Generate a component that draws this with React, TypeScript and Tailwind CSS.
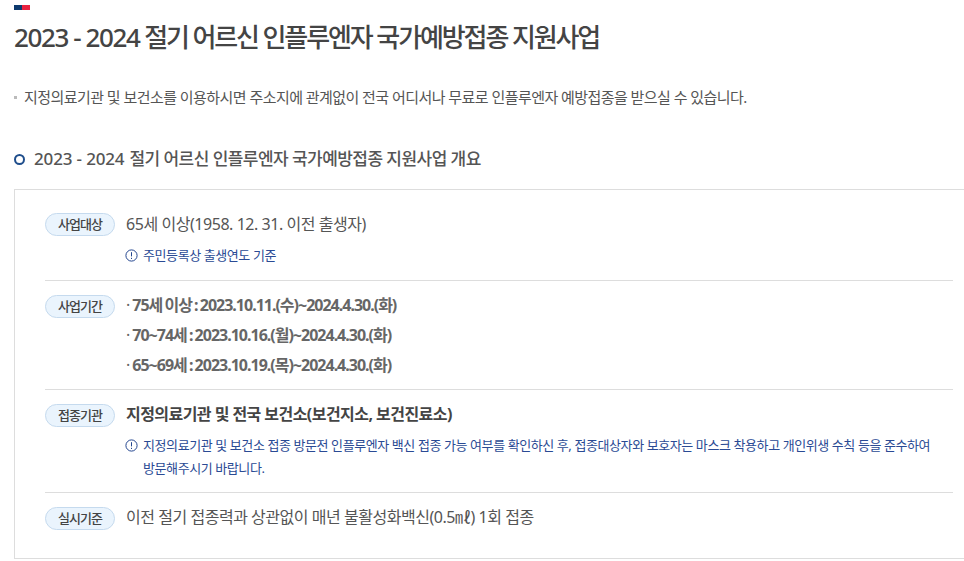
function Badge({ label }: { label: string }) {
  return (
    <span className="flex h-[23px] w-[70px] flex-none items-center justify-center rounded-full border border-[#c5daee] bg-[#eaf4fd] text-[13px] font-medium tracking-[-0.9px] text-[#444]">
      {label}
    </span>
  );
}

function InfoIcon() {
  return (
    <svg className="h-[13px] w-[13px] flex-none" viewBox="0 0 13 13" fill="none" stroke="#24468f">
      <circle cx="6.5" cy="6.5" r="5.6" />
      <path d="M6.5 3.2v4.2M6.5 8.8v1.2" />
    </svg>
  );
}

function Note({ children }: { children: React.ReactNode }) {
  return (
    <div className="-ml-px flex w-[820px] gap-[5px] text-[13px] leading-[23px] tracking-[-0.41px] text-[#2a4a94]">
      <span className="flex h-[23px] flex-none items-start pt-[5px]"><InfoIcon /></span>
      <p>{children}</p>
    </div>
  );
}

function DateLine({ children }: { children: React.ReactNode }) {
  return (
    <p className="h-[30px] text-[16px] font-bold leading-[30px] tracking-[-1px] text-[#666] [word-spacing:-1px]">
      <span className="mr-[3px] font-normal">·</span>
      {children}
    </p>
  );
}

export default function App() {
  return (
    <div className="h-[561px] w-[964px] overflow-hidden bg-white pl-[14px] pt-[5px] font-['Noto_Sans','Noto_Sans_CJK_KR',sans-serif]">
      <div className="flex h-[5px] w-[16px]">
        <div className="w-[8px] bg-[#0d3a6e]" />
        <div className="w-[8px] bg-[#e8223f]" />
      </div>
      <h1 className="mt-[8px] text-[26px] font-medium leading-[38px] tracking-[-2.1px] text-[#444]">
        <span className="tracking-[-1.4px]">2023 - 2024</span>{" "}
        절기 어르신 인플루엔자 국가예방접종 지원사업
      </h1>
      <p className="mt-[31px] flex items-center text-[15px] leading-[20px] tracking-[-0.55px] text-[#555]">
        <span className="mr-[7px] h-[3px] w-[3px] bg-[#bbb]" />
        지정의료기관 및 보건소를 이용하시면 주소지에 관계없이 전국 어디서나 무료로 인플루엔자 예방접종을 받으실 수 있습니다.
      </p>
      <h2 className="mt-[40px] flex items-center text-[17px] font-medium leading-[24px] tracking-[-0.55px] text-[#555]">
        <span className="mr-[9px] h-[11px] w-[11px] rounded-full border-2 border-[#1f4e8c]" />
        <span className="mr-[5px] tracking-[-0.15px]">2023 - 2024</span>
        절기 어르신 인플루엔자 국가예방접종 지원사업 개요
      </h2>
      <div className="mt-[18px] h-[370px] w-[970px] border border-[#ddd] pl-[30px] pr-[21px] pt-[23px]">
        <div className="w-[908px]">
          <div className="flex h-[68px] gap-[11px] border-b border-[#ddd]">
            <Badge label="사업대상" />
            <div>
              <p className="text-[16px] leading-[23px] tracking-[-0.45px] text-[#555]">65세 이상(1958. 12. 31. 이전 출생자)</p>
              <div className="mt-[8px]"><Note>주민등록상 출생연도 기준</Note></div>
            </div>
          </div>
          <div className="flex h-[109px] gap-[11px] border-b border-[#ddd] pt-[9px]">
            <div className="mt-[5px]"><Badge label="사업기간" /></div>
            <div>
              <DateLine>75세 이상 : 2023.10.11.(수)~2024.4.30.(화)</DateLine>
              <DateLine>70~74세 : 2023.10.16.(월)~2024.4.30.(화)</DateLine>
              <DateLine>65~69세 : 2023.10.19.(목)~2024.4.30.(화)</DateLine>
            </div>
          </div>
          <div className="flex h-[103px] gap-[11px] border-b border-[#ddd] pt-[14px]">
            <Badge label="접종기관" />
            <div className="-mt-px">
              <p className="text-[16px] font-bold leading-[23px] tracking-[-0.55px] text-[#444]">지정의료기관 및 전국 보건소(보건지소, 보건진료소)</p>
              <div className="mt-[8px]">
                <Note>
                  지정의료기관 및 보건소 접종 방문전 인플루엔자 백신 접종 가능 여부를 확인하신 후, 접종대상자와 보호자는 마스크 착용하고 개인위생 수칙 등을 준수하여
                  <br />
                  방문해주시기 바랍니다.
                </Note>
              </div>
            </div>
          </div>
          <div className="flex gap-[11px] pt-[14px]">
            <Badge label="실시기준" />
            <p className="-mt-px text-[16px] leading-[23px] tracking-[-0.47px] text-[#555]">이전 절기 접종력과 상관없이 매년 불활성화백신(0.5㎖) 1회 접종</p>
          </div>
        </div>
      </div>
    </div>
  );
}
